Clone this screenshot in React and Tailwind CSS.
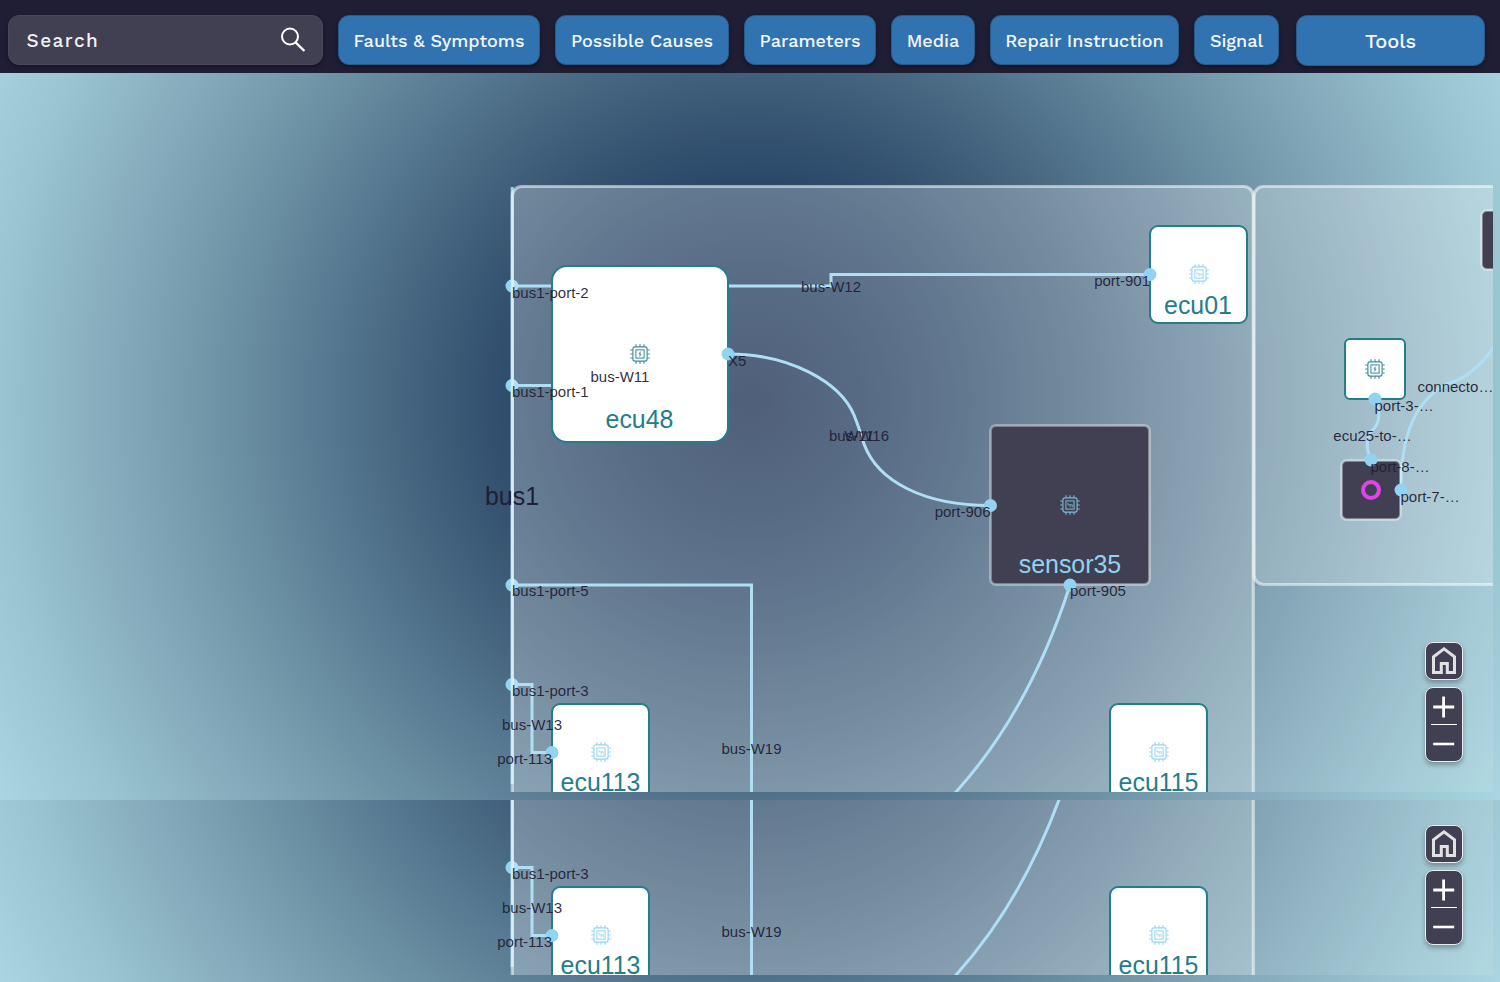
import React from "react";

const tabs = [
  ["Faults & Symptoms", "w-[202px]"],
  ["Possible Causes", "w-[174px]"],
  ["Parameters", "w-[132px]"],
  ["Media", "w-[84px]"],
  ["Repair Instruction", "w-[189px]"],
  ["Signal", "w-[85px]"],
];

const button =
  "flex items-center justify-center rounded-[11px] border border-[#265b8c] bg-[#3173b1] font-medium text-[#f3f7fb] shadow-[0_2px_4px_rgba(0,0,0,0.35)]";

function Header() {
  return (
    <header className="flex h-[73px] items-start bg-[#1f1e35] pt-[15px] pl-2 font-['Work_Sans','Inter',sans-serif]">
      <div className="flex h-[50px] w-[315px] items-center justify-between rounded-[11px] border border-[#4a495b] bg-[#414052] pr-[15px] pl-[17.5px] shadow-[0_2px_4px_rgba(0,0,0,0.35)]">
        <span className="pt-0.5 text-[19px] font-medium tracking-[1.45px] text-[#f1f1f4]">Search</span>
        <svg width="28" height="28" viewBox="0 0 28 28" fill="none" stroke="#fff" strokeWidth="2">
          <circle cx="11" cy="10.5" r="8" />
          <path d="M16.6 16.4 L25.4 25" strokeWidth="2.4" />
        </svg>
      </div>
      <nav className="ml-[15px] flex gap-[15px]">
        {tabs.map(([name, width]) => (
          <button key={name} className={`${button} h-[50px] whitespace-nowrap text-[18px] ${width}`}>
            {name}
          </button>
        ))}
      </nav>
      <button className={`${button} ml-[17px] h-[51px] w-[189px] text-[20px]`}>Tools</button>
    </header>
  );
}

function Chip({ className, bolt }) {
  return (
    <svg width="20" height="20" viewBox="0 0 20 20" fill="none" stroke="currentColor" className={className}>
      <rect x="2.9" y="2.9" width="14.2" height="14.2" rx="2" strokeWidth="1.1" />
      <rect x="5.9" y="5.9" width="8.2" height="8.2" strokeWidth="1" />
      <path
        d="M6 0.3V2.6M10 0.3V2.6M14 0.3V2.6M6 17.4V19.7M10 17.4V19.7M14 17.4V19.7M0.3 6H2.6M0.3 10H2.6M0.3 14H2.6M17.4 6H19.7M17.4 10H19.7M17.4 14H19.7"
        strokeWidth="1.1"
      />
      {bolt ? (
        <path d="M10.7 7.6L8.9 10H11.1L9.4 12.4" strokeWidth="1" />
      ) : (
        <path d="M7.9 7.8V9.8H12.4M10.2 9.8V12.2M12.3 9.8V12.2" strokeWidth="0.8" />
      )}
    </svg>
  );
}

function Ecu({ place, bolt }) {
  return (
    <div className={`absolute flex items-center justify-center border-2 border-[#237d8b] bg-white ${place}`}>
      <Chip bolt={bolt} className={bolt ? "text-[#358b97]" : "mb-px text-[#92d3f2]"} />
    </div>
  );
}

function DarkNode({ place, children }) {
  return (
    <div
      className={`absolute flex items-center justify-center rounded-[5px] bg-[#414052] shadow-[0_0_0_2px_rgba(255,255,255,0.34),inset_0_0_0_1px_rgba(255,255,255,0.35)] ${place}`}
    >
      {children}
    </div>
  );
}

const labels = [
  ["bus1-port-2", 512, 298, "start"],
  ["bus1-port-1", 512, 397, "start"],
  ["bus1-port-5", 512, 596, "start"],
  ["bus1-port-3", 512, 696, "start"],
  ["X5", 728, 366, "start"],
  ["bus-W12", 831, 292, "middle"],
  ["port-901", 1150, 286, "end"],
  ["bus-W11", 620, 382, "middle"],
  ["bus-W16", 859, 441, "middle"],
  ["W11", 859, 441, "middle"],
  ["port-906", 990.5, 517, "end"],
  ["port-905", 1070, 596, "start"],
  ["bus-W13", 532, 730, "middle"],
  ["port-113", 552, 764, "end"],
  ["bus-W19", 751.5, 754, "middle"],
  ["connecto…", 1417.5, 392, "start"],
  ["port-3-…", 1374.5, 411, "start"],
  ["ecu25-to-…", 1372.5, 441, "middle"],
  ["port-8-…", 1370.5, 472, "start"],
  ["port-7-…", 1400.5, 502, "start"],
];

const names = [
  ["ecu48", 639.5, 428, "#237d8b"],
  ["ecu01", 1198, 314, "#237d8b"],
  ["ecu113", 600.5, 791, "#237d8b"],
  ["ecu115", 1158.5, 791, "#237d8b"],
  ["sensor35", 1070, 573, "#92d3f2"],
  ["bus1", 512, 505, "#1f1e35"],
];

const busPorts = [286, 385.5, 585, 684.5];
const nodePorts = [
  [728, 354], [1150, 274.5], [990.5, 505.5], [1070, 585], [552, 752.5],
  [1375, 399], [1371, 460], [1401, 490],
];

function Diagram() {
  return (
    <div className="relative h-[719px] w-[1493px] overflow-hidden">
      <div className="absolute -top-[73px] left-0 h-[800px] w-[1500px]">
        <svg className="absolute inset-0" width="1500" height="800" fill="none">
          <g stroke="#92d3f2" strokeWidth="3">
            <path d="M512.2 187V784" />
            <path d="M512 286H831V274.5H1150" />
            <path d="M512 385.5H560" />
            <path d="M512 585H751.5V800" />
            <path d="M512 684.5H532V752.5H552" />
            <path d="M728 354C790 354 840 382 854 415Q861 433 864 444C878 482 925 505.5 990 505.5" />
            <path d="M1070 585Q1030 710 956 792L949 799" />
            <path d="M1376 399Q1383 420 1373 429.5Q1363 439 1370.5 460" />
            <path d="M1401 490Q1400 408 1447 384Q1478 375 1500 337" />
          </g>
          {busPorts.map((y) => (
            <circle key={y} cx="512" cy={y} r="6.5" fill="#92d3f2" />
          ))}
          <rect x="1253.5" y="586" width="300" height="300" fill="#fff" fillOpacity="0.11" />
          <g fill="#fff" fillOpacity="0.27" stroke="#fff" strokeOpacity="0.54" strokeWidth="3.2">
            <rect x="512.3" y="186.5" width="741" height="700" rx="9.5" />
            <rect x="1254" y="186.5" width="400" height="398" rx="9.5" />
          </g>
        </svg>
        <Ecu bolt place="left-[551px] top-[265px] h-[178px] w-[178px] rounded-[16px]" />
        <Ecu place="left-[1149px] top-[225px] h-[99px] w-[99px] rounded-[9px]" />
        <Ecu place="left-[551px] top-[703px] h-[99px] w-[99px] rounded-[9px]" />
        <Ecu place="left-[1109px] top-[703px] h-[99px] w-[99px] rounded-[9px]" />
        <Ecu bolt place="left-[1344px] top-[338px] h-[62px] w-[62px] rounded-[6px]" />
        <DarkNode place="left-[991px] top-[426px] h-[158px] w-[158px]">
          <Chip className="text-[#7dbcd8]" />
        </DarkNode>
        <DarkNode place="left-[1342px] top-[461px] h-[58px] w-[58px]">
          <span className="h-5 w-5 rounded-full border-[4px] border-[#e044ea]" />
        </DarkNode>
        <DarkNode place="left-[1482px] top-[211px] h-[58px] w-[58px]" />
        <svg
          className="absolute inset-0 font-['Liberation_Sans',Arial,sans-serif]"
          width="1500"
          height="800"
        >
          {nodePorts.map(([x, y]) => (
            <circle key={`${x}-${y}`} cx={x} cy={y} r="6.5" fill="#92d3f2" />
          ))}
          {names.map(([text, x, y, fill]) => (
            <text key={text} x={x} y={y} fill={fill} textAnchor="middle" fontSize="24.9">
              {text}
            </text>
          ))}
          {labels.map(([text, x, y, anchor]) => (
            <text key={text} x={x} y={y} fill="#1f1e35" fillOpacity="0.94" textAnchor={anchor} fontSize="15">
              {text}
            </text>
          ))}
        </svg>
      </div>
      <Controls />
    </div>
  );
}

function Controls() {
  const box =
    "flex w-[38px] rounded-[8px] border border-[#e9eef2] bg-[#414052] shadow-[0_3px_5px_rgba(0,0,0,0.3)]";
  return (
    <div className="absolute right-[30px] bottom-[30px] flex flex-col gap-[7px]">
      <button className={`${box} h-[38px] items-center justify-center`}>
        <svg width="36" height="36" viewBox="0 0 36 36" fill="none" stroke="#e1e1e1" strokeWidth="3">
          <path d="M7.5 29.5V13.8L18 5.8L28.5 13.8V29.5H21.3V20.5H15.3V29.5Z" />
        </svg>
      </button>
      <div className={`${box} h-[75px] flex-col items-center`}>
        <button className="flex h-[36px] items-center justify-center pt-[2px]">
          <svg width="22" height="22" viewBox="0 0 22 22" stroke="#fff" strokeWidth="2.8">
            <path d="M0.2 11H21.2M10.6 0.5V21.5" />
          </svg>
        </button>
        <span className="h-px w-[26px] bg-white" />
        <button className="flex h-[36px] items-center justify-center pt-px">
          <svg width="22" height="22" viewBox="0 0 22 22" stroke="#fff" strokeWidth="2.6">
            <path d="M0.2 11H21.2" />
          </svg>
        </button>
      </div>
    </div>
  );
}

function Screen() {
  return (
    <div className="h-[800px] w-[1500px] bg-[radial-gradient(circle_850px_at_750px_400px,#0f2448_0px,#1c375a_130px,#2a4868_220px,#41607b_327px,#54758e_411px,#7398aa_551px,#86abbc_640px,#99c4d0_750px,#a9d6e0_850px)]">
      <Header />
      <Diagram />
    </div>
  );
}

export default function App() {
  return (
    <main className="h-[982px] w-[1500px] overflow-hidden">
      <Screen />
      <section className="h-[182px] overflow-hidden">
        <div className="-mt-[617px]">
          <Screen />
        </div>
      </section>
    </main>
  );
}
